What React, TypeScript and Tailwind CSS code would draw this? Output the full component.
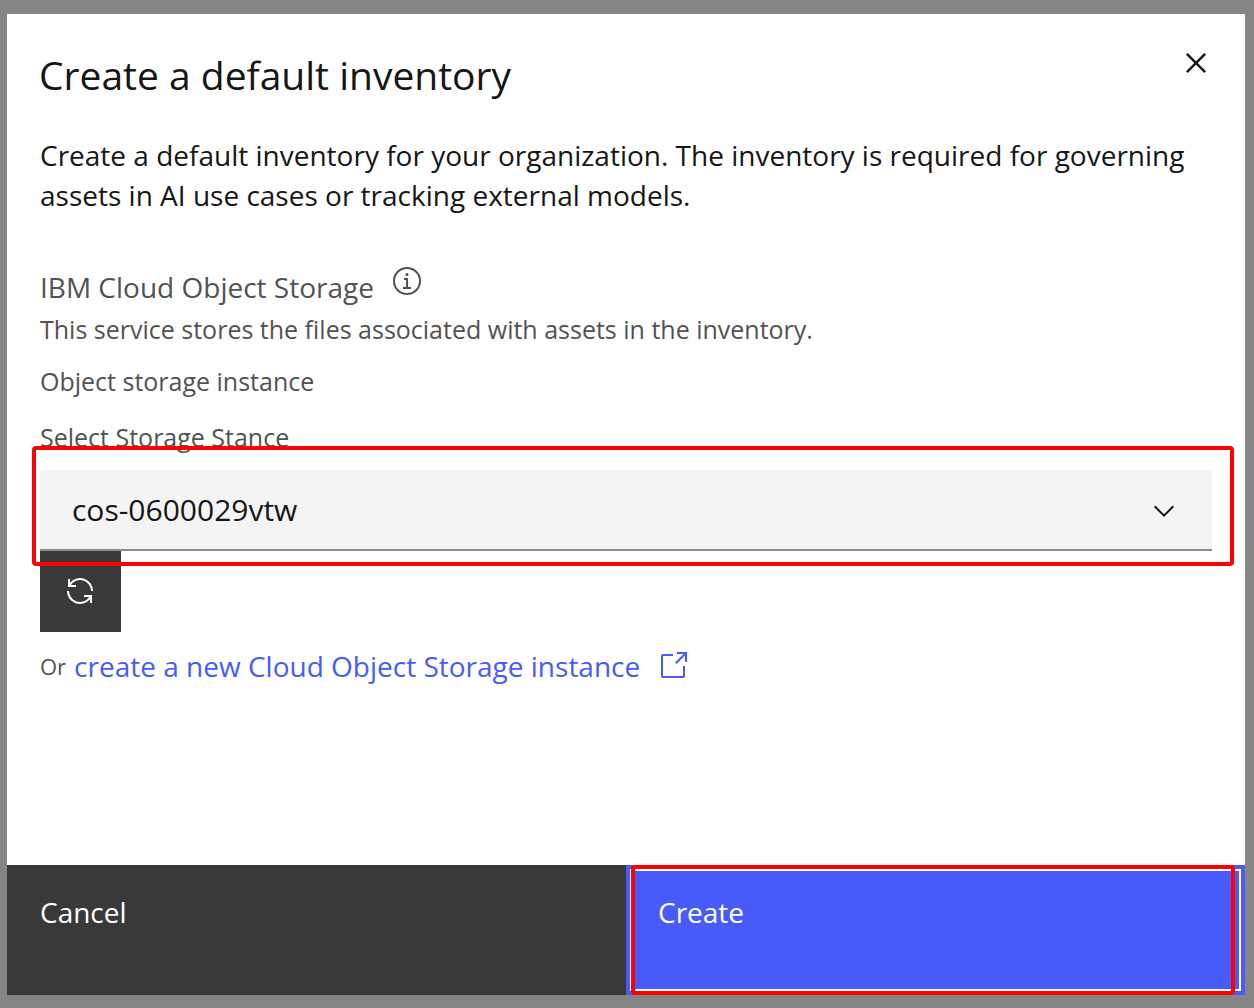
import { useState } from 'react';

function CloseIcon() {
  return (
    <svg viewBox="0 0 32 32" className="size-10" fill="currentColor" aria-hidden="true">
      <path d="M17.4141 16 24 9.4141 22.5859 8 16 14.5859 9.4143 8 8 9.4141 14.5859 16 8 22.5859 9.4143 24 16 17.4141 22.5859 24 24 22.5859Z" />
    </svg>
  );
}

function InfoIcon() {
  return (
    <svg viewBox="0 0 32 32" className="size-8" fill="currentColor" aria-hidden="true">
      <path d="M17 22V13H13V15H15V22H12V24H20V22Z" />
      <path d="M16 8a1.5 1.5 0 1 0 1.5 1.5A1.5 1.5 0 0 0 16 8Z" />
      <path d="M16 30A14 14 0 1 1 30 16 14 14 0 0 1 16 30ZM16 4A12 12 0 1 0 28 16 12 12 0 0 0 16 4Z" />
    </svg>
  );
}

function ChevronIcon() {
  return (
    <svg viewBox="0 0 16 16" className="size-8" fill="currentColor" aria-hidden="true">
      <path d="M8 11 3 6 3.7 5.3 8 9.6 12.3 5.3 13 6Z" />
    </svg>
  );
}

function RenewIcon() {
  return (
    <svg viewBox="0 0 32 32" className="size-8" fill="currentColor" aria-hidden="true">
      <path d="M12 10H6.78A11 11 0 0 1 27 16h2A13 13 0 0 0 6 7.68V4H4v8h8Z" />
      <path d="M20 22h5.22A11 11 0 0 1 5 16H3a13 13 0 0 0 23 8.32V28h2V20H20Z" />
    </svg>
  );
}

function LaunchIcon() {
  return (
    <svg viewBox="0 0 32 32" className="size-8" fill="currentColor" aria-hidden="true">
      <path d="M26 28H6a2 2 0 0 1-2-2V6A2 2 0 0 1 6 4H16V6H6V26H26V16h2V26A2 2 0 0 1 26 28Z" />
      <path d="M20 2V4H26.586L18 12.586 19.414 14 28 5.414V12H30V2Z" />
    </svg>
  );
}

export default function App() {
  const [instance, setInstance] = useState('cos-0600029vtw');

  return (
    <div className="flex min-h-screen bg-[#858585] pt-3.5 pr-[9px] pb-[13px] pl-[7px] font-['Open_Sans',sans-serif] text-[28px] leading-10 text-[#161616]">
      <div role="dialog" aria-labelledby="dialog-title" className="flex flex-1 flex-col bg-white">
        <header className="flex items-start justify-between pt-[29px] pr-[29px] pl-8">
          <h1 id="dialog-title" className="pt-2 text-[39px] leading-12">
            Create a default inventory
          </h1>
          <button type="button" aria-label="Close">
            <CloseIcon />
          </button>
        </header>

        <main className="flex-1 pt-9 pr-[33px] pl-[33px]">
          <p>
            Create a default inventory for your organization. The inventory is required for governing
            assets in AI use cases or tracking external models.
          </p>

          <section className="pt-[50px] text-[#525252]">
            <div className="flex items-start gap-[17px]">
              <h2 className="pt-0.5">IBM Cloud Object Storage</h2>
              <button type="button" aria-label="About IBM Cloud Object Storage">
                <InfoIcon />
              </button>
            </div>
            <p className="pt-1 text-[25px] leading-9">
              This service stores the files associated with assets in the inventory.
            </p>
            <p className="pt-4 text-[25px] leading-9">Object storage instance</p>

            <div className="relative pt-5">
              <div className="pointer-events-none absolute inset-x-[-8px] top-[47px] -bottom-[15px] z-10 -mr-3.5 rounded-sm border-4 border-[#ff0000]" />
              <label htmlFor="instance" className="block pb-[15px] text-[25px] leading-9">
                Select Storage Stance
              </label>
              <div className="relative">
                <select
                  id="instance"
                  value={instance}
                  onChange={(e) => setInstance(e.target.value)}
                  className="block h-[81px] w-full appearance-none rounded-none border-b-2 border-[#8d8d8d] bg-[#f4f4f4] px-8 text-3xl text-[#161616]"
                >
                  <option>cos-0600029vtw</option>
                </select>
                <span className="pointer-events-none absolute inset-y-0 right-8 flex items-center text-[#161616]">
                  <ChevronIcon />
                </span>
              </div>
            </div>

            <button
              type="button"
              aria-label="Refresh instances"
              className="flex size-[81px] items-center justify-center bg-[#393939] pr-px pb-px text-white"
            >
              <RenewIcon />
            </button>

            <p className="flex items-center gap-2 pt-4 text-[22px] leading-9">
              Or
              <a href="#create" className="flex items-center gap-[17px] text-[28px] text-[#475bfb]">
                create a new Cloud Object Storage instance
                <LaunchIcon />
              </a>
            </p>
          </section>
        </main>

        <footer className="grid grid-cols-2 text-white">
          <button type="button" className="flex h-[130px] items-start bg-[#393939] px-[33px] pt-[27px]">
            Cancel
          </button>
          <div className="relative">
            <button
              type="button"
              className="flex h-[130px] w-full items-start border-4 border-[#475bfb] bg-[#475bfb] px-7 pt-[23px] ring-2 ring-white ring-inset"
            >
              Create
            </button>
            <div className="pointer-events-none absolute inset-y-0 right-2.5 left-[5px] rounded-sm border-4 border-[#ff0000]" />
          </div>
        </footer>
      </div>
    </div>
  );
}
